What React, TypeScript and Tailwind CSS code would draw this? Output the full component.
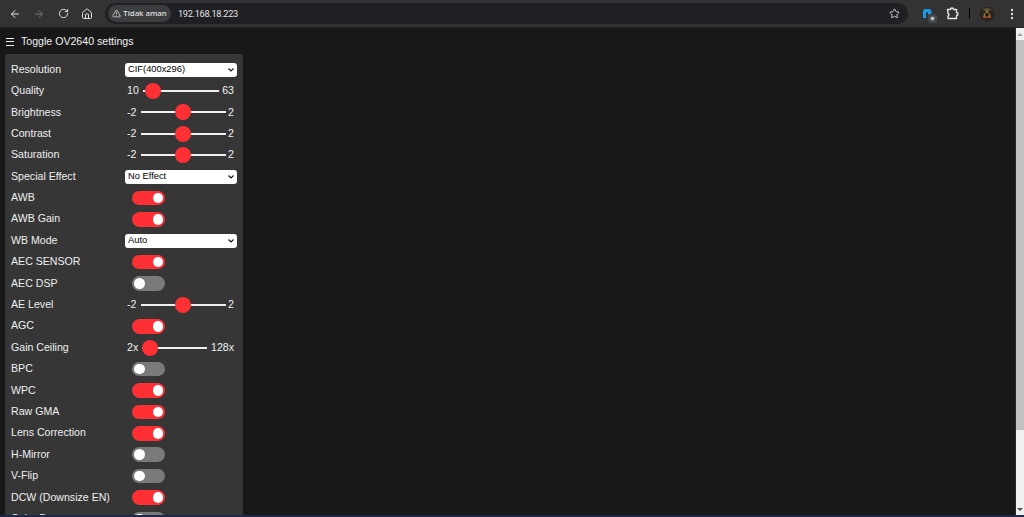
import { ArrowLeft, ArrowRight, RotateCw, House, TriangleAlert, Star } from 'lucide-react'

const rangeClass =
  "block h-4 min-w-0 appearance-none bg-transparent [&::-webkit-slider-runnable-track]:h-[2px] [&::-webkit-slider-runnable-track]:bg-[#efefef] [&::-webkit-slider-thumb]:-mt-[7px] [&::-webkit-slider-thumb]:h-4 [&::-webkit-slider-thumb]:w-4 [&::-webkit-slider-thumb]:appearance-none [&::-webkit-slider-thumb]:rounded-full [&::-webkit-slider-thumb]:bg-[#ff3034]"

function Row({ label, children }: { label: string; children: React.ReactNode }) {
  return (
    <div className="flex h-[21.4px] shrink-0 items-center">
      <span className="w-[114px] shrink-0 text-[10.6px] text-[#efefef]">{label}</span>
      <div className="flex w-[112px] items-center">{children}</div>
    </div>
  )
}

function Picker({ label, value }: { label: string; value: string }) {
  return (
    <Row label={label}>
      <div className="relative h-[14px] w-[112px]">
        <select
          defaultValue={value}
          className="block h-[14px] w-[112px] appearance-none rounded-[3px] bg-white pl-[3px] text-[9.33px] leading-none text-black"
        >
          <option>{value}</option>
        </select>
        {/* select arrow */}
        <svg className="absolute right-[3px] top-[5px]" width="6" height="4" viewBox="0 0 6 4" fill="none" stroke="#1a1a1a" strokeWidth="1.2">
          <path d="M.5.5 3 3 5.500.5" />
        </svg>
      </div>
    </Row>
  )
}

function Toggle({ label, on }: { label: string; on?: boolean }) {
  return (
    <Row label={label}>
      <div
        className={
          on
            ? 'ml-[7px] flex h-[14.5px] w-[33px] items-center justify-end rounded-full bg-[#ff3034] px-[2px]'
            : 'ml-[7px] flex h-[14.5px] w-[33px] items-center justify-start rounded-full bg-[#7a7a7a] px-[2px]'
        }
      >
        <div className="h-[10.5px] w-[10.5px] rounded-full bg-white" />
      </div>
    </Row>
  )
}

function Slider({ label, min, max, value, from, to }: { label: string; min: string; max: string; value: number; from: number; to: number }) {
  return (
    <Row label={label}>
      <div className="flex w-full items-center justify-between pl-[2px] pr-[3px] text-[10.6px] text-[#efefef]">
        <span>{min}</span>
        <input
          type="range"
          min={from}
          max={to}
          defaultValue={value}
          className={
            label === 'Quality'
              ? `${rangeClass} w-[76px]`
              : label === 'Gain Ceiling'
                ? `${rangeClass} w-[65px]`
                : `${rangeClass} ml-[2px] w-[85px]`
          }
        />
        <span>{max}</span>
      </div>
    </Row>
  )
}

function BrowserBar() {
  return (
    <div className="flex h-[28px] shrink-0 items-center border-b border-[#232323] bg-[#333333] pl-[3px]">
      <div className="flex w-[24px] justify-center text-[#e3e3e3]"><ArrowLeft size={12} strokeWidth={2} /></div>
      <div className="flex w-[24px] justify-center text-[#767676]"><ArrowRight size={12} strokeWidth={2} /></div>
      <div className="flex w-[24px] justify-center text-[#e3e3e3]"><RotateCw size={11} strokeWidth={2} /></div>
      <div className="flex w-[24px] justify-center text-[#e3e3e3]"><House size={12} strokeWidth={2} /></div>
      <div className="ml-[6px] flex h-[21px] flex-1 items-center rounded-full bg-[#1f2023] pl-[3px] pr-[8px]">
        <div className="flex h-[17px] w-[63px] items-center justify-center gap-[2px] rounded-full bg-[#3c3d3f] text-[#e3e3e3]">
          <TriangleAlert size={9} strokeWidth={2} />
          <span className="font-['Noto_Sans',sans-serif] text-[7.8px] font-medium">Tidak aman</span>
        </div>
        <span className="ml-[7px] flex-1 font-['Roboto',sans-serif] text-[9.2px] tracking-[-0.3px] text-[#e3e3e3]">192.168.18.223</span>
        <Star size={11} strokeWidth={2} className="text-[#d5d5d5]" />
      </div>
      <div className="flex w-[116px] items-center pl-[9px]">
        <svg className="overflow-visible" width="20" height="20" viewBox="0 0 20 20">
          <path d="M6 14V7.500C6 6 7 5 8.500 5H11.500c1.700 0 3 1.300 3 3v2.500h-3.400V9c0-.5-.3-.8-.8-.8H9.800c-.5 0-.8.3-.8.8v5z" fill="#1a9be8" />
          <rect x="11" y="10" width="9" height="9" rx="2" fill="#43464b" />
          <circle cx="15.500" cy="14.500" r="2" fill="#b7bcc4" />
        </svg>
        <svg className="ml-[5px]" width="20" height="20" viewBox="0 0 20 20" fill="none" stroke="#e6e6e6" strokeWidth="1.400" strokeLinejoin="round">
          <path d="M5.500 5.500h3c0-2 3-2 3 0h3v3c2 0 2 3 0 3v3h-8.500v-2.500c1.300 0 1.300-2.500 0-2.500z" />
        </svg>
        <div className="ml-[7px] h-[11px] w-px bg-black" />
        <svg className="ml-[7px]" width="20" height="20" viewBox="0 0 20 20">
          <circle cx="10" cy="10" r="7.500" fill="#2a2521" />
          <path d="M5.500 5.500C7 3.500 13 3.500 14.500 5.500L13 7H7z" fill="#57483c" />
          <path d="M6 13l1.200-3.500L10 7l2.800 2.500L14 13z" fill="#8d6e22" />
          <rect x="8.500" y="9" width="3" height="3.500" fill="#171717" />
          <circle cx="10" cy="7" r=".8" fill="#d9b13a" />
          <rect x="6" y="13" width="8" height="1" fill="#a5392c" />
        </svg>
        <svg className="ml-[5px]" width="20" height="20" viewBox="0 0 20 20" fill="#dcdcdc">
          <circle cx="10" cy="6" r="1.200" />
          <circle cx="10" cy="10" r="1.200" />
          <circle cx="10" cy="14" r="1.200" />
        </svg>
      </div>
    </div>
  )
}

function PageScrollbar() {
  return (
    <div className="flex w-[9px] shrink-0 flex-col items-center border-l border-[#2c2c2c] bg-[#f1f1f1]">
      <div className="flex h-[12px] w-full items-center justify-center">
        <div className="h-0 w-0 border-x-[3px] border-b-[3px] border-x-transparent border-b-[#a3a3a3]" />
      </div>
      <div className="h-[390px] w-full bg-[#c1c1c1]" />
      <div className="flex-1" />
      <div className="flex h-[12px] w-full items-center justify-center">
        <div className="h-0 w-0 border-x-[3px] border-t-[3px] border-x-transparent border-t-[#505050]" />
      </div>
    </div>
  )
}

export default function App() {
  return (
    <div className="flex h-[517px] w-[1024px] flex-col overflow-hidden bg-[#181818] font-['Liberation_Sans',Arial,sans-serif]">
      <BrowserBar />
      <div className="flex min-h-0 flex-1">
        <main className="min-w-0 flex-1 overflow-hidden">
          <div className="flex h-[26px] items-center pl-[6px] pt-[1px]">
            <div className="flex w-[8px] flex-col gap-[2.5px]">
              <div className="h-px bg-[#efefef]" />
              <div className="h-px bg-[#efefef]" />
              <div className="h-px bg-[#efefef]" />
            </div>
            <span className="ml-[7px] text-[10.6px] text-[#efefef]">Toggle OV2640 settings</span>
          </div>
          <div className="ml-[5px] flex w-[238px] flex-col rounded-[3px] bg-[#363636] pl-[6px] pt-[5px]">
            <Picker label="Resolution" value="CIF(400x296)" />
            <Slider label="Quality" min="10" max="63" value={12} from={10} to={63} />
            <Slider label="Brightness" min="-2" max="2" value={0} from={-2} to={2} />
            <Slider label="Contrast" min="-2" max="2" value={0} from={-2} to={2} />
            <Slider label="Saturation" min="-2" max="2" value={0} from={-2} to={2} />
            <Picker label="Special Effect" value="No Effect" />
            <Toggle label="AWB" on />
            <Toggle label="AWB Gain" on />
            <Picker label="WB Mode" value="Auto" />
            <Toggle label="AEC SENSOR" on />
            <Toggle label="AEC DSP" />
            <Slider label="AE Level" min="-2" max="2" value={0} from={-2} to={2} />
            <Toggle label="AGC" on />
            <Slider label="Gain Ceiling" min="2x" max="128x" value={0} from={0} to={6} />
            <Toggle label="BPC" />
            <Toggle label="WPC" on />
            <Toggle label="Raw GMA" on />
            <Toggle label="Lens Correction" on />
            <Toggle label="H-Mirror" />
            <Toggle label="V-Flip" />
            <Toggle label="DCW (Downsize EN)" on />
            <Toggle label="Color Bar" />
          </div>
        </main>
        <PageScrollbar />
      </div>
      <div className="h-[2px] shrink-0 bg-[#1b2a45]" />
    </div>
  )
}
